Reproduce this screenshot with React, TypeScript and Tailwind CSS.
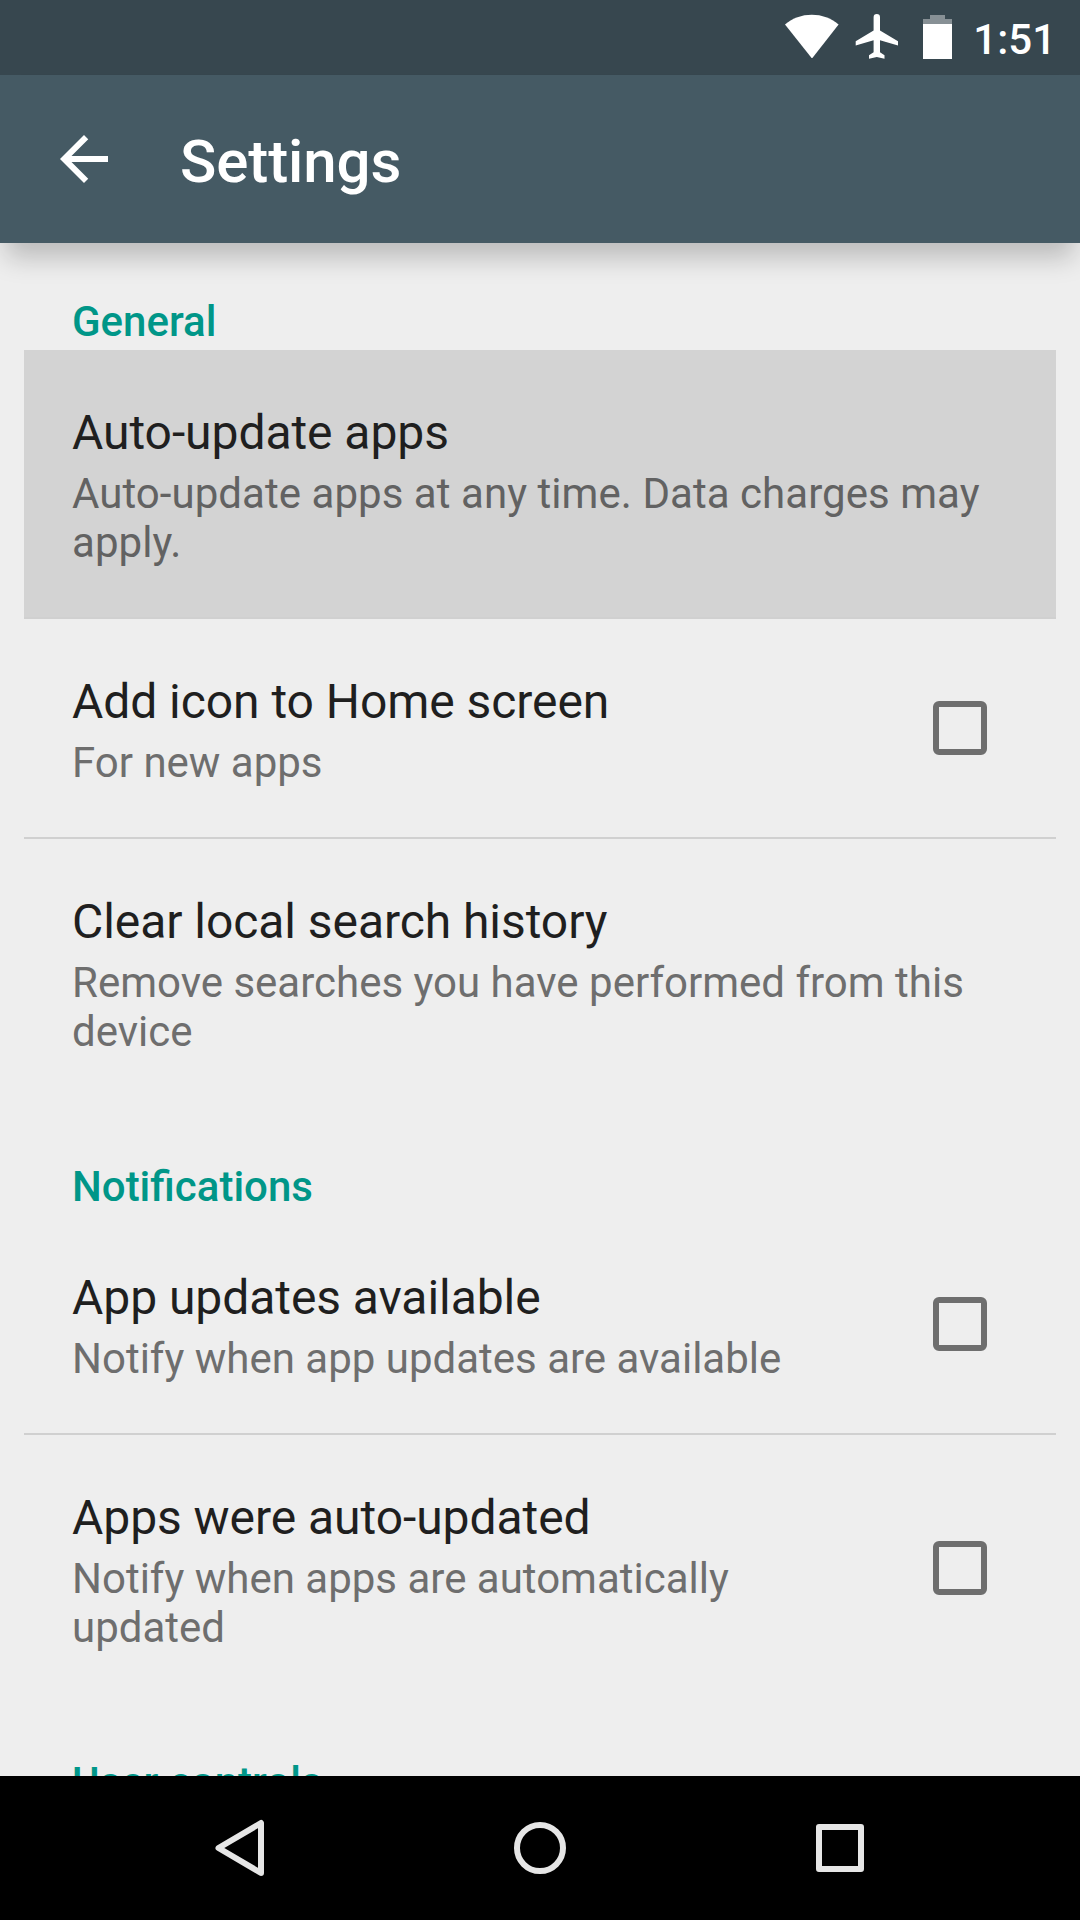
import { clsx } from 'clsx'

type Setting = {
  title: string
  summary: string
  checkbox?: boolean
  pressed?: boolean
}

type Section = {
  heading: string
  items: Setting[]
}

const sections: Section[] = [
  {
    heading: 'General',
    items: [
      {
        title: 'Auto-update apps',
        summary: 'Auto-update apps at any time. Data charges may apply.',
        pressed: true,
      },
      { title: 'Add icon to Home screen', summary: 'For new apps', checkbox: true },
      {
        title: 'Clear local search history',
        summary: 'Remove searches you have performed from this device',
      },
    ],
  },
  {
    heading: 'Notifications',
    items: [
      {
        title: 'App updates available',
        summary: 'Notify when app updates are available',
        checkbox: true,
      },
      {
        title: 'Apps were auto-updated',
        summary: 'Notify when apps are automatically updated',
        checkbox: true,
      },
    ],
  },
  { heading: 'User controls', items: [] },
]

function StatusBar() {
  return (
    <div className="flex h-[75px] shrink-0 items-start justify-end bg-[#37474f] pr-[24px] text-white">
      <svg className="mt-[14px] h-[45px] w-[54px]" viewBox="0 0 54 45" fill="currentColor">
        <path d="M26.6 44 0 10.5C7.600 4 16.800.7 26.800.7S46 4 53.600 10.500L27.400 44Z" />
      </svg>
      <svg className="mt-[14px] ml-[16px] h-[45px] w-[44px]" viewBox="0 0 44 45" fill="currentColor">
        <path d="M43 31.500v-4.200L25 16.400V3.300a3.200 3.200 0 0 0-6.400 0v13.100L.700 27.300v4.200l17.900-5.200v12L14 41.300v3.500l7.800-1.900 7.700 1.900v-3.500L25 38.300v-12Z" />
      </svg>
      <svg className="mt-[15px] ml-[24px] h-[44px] w-[29px]" viewBox="0 0 29 44" fill="currentColor">
        <path d="M7 0h15v4h7v5H0V4h7Z" opacity="0.4" />
        <path d="M0 9h29v35H0Z" />
      </svg>
      <span className="mt-[15px] ml-[21px] text-[42px] leading-[49px] font-medium">1:51</span>
    </div>
  )
}

function AppBar() {
  return (
    <header className="z-10 flex h-[168px] shrink-0 items-center bg-[#455a64] px-12 text-white shadow-[0_20px_25px_-6px_rgba(0,0,0,0.22)]">
      <svg className="size-[72px]" viewBox="0 0 24 24" fill="currentColor">
        <path d="M20 11H7.830l5.590-5.590L12 4l-8 8 8 8 1.410-1.410L7.830 13H20v-2z" />
      </svg>
      <h1 className="mt-[6px] ml-[60px] text-[60px] leading-[70px] font-medium tracking-[-0.1px]">
        Settings
      </h1>
    </header>
  )
}

function SettingRow({ item, last }: { item: Setting; last: boolean }) {
  return (
    <li
      className={clsx(
        'mx-6 flex items-center border-b-2 pt-[54px] pr-[69px] pl-12',
        item.pressed ? 'border-[#d0d0d0] bg-[#d3d3d3] pb-[50px]' : 'pb-[49px]',
        !item.pressed && (last ? 'border-transparent' : 'border-[#d0d0d0]')
      )}
    >
      <div className="flex-1">
        <div className="text-[48px] leading-[57px] tracking-[-0.06px] text-[#1f1f1f]">
          {item.title}
        </div>
        <div
          className={clsx(
            'mt-[8px] min-h-[50px] text-[42px] leading-[49px]',
            item.pressed ? 'tracking-[0.05px] text-[#626262]' : 'text-[#6e6e6e]'
          )}
        >
          {item.summary}
        </div>
      </div>
      {item.checkbox && (
        <span className="mb-[5px] ml-[72px] size-[54px] shrink-0 rounded-[6px] border-6 border-[#6e6e6e]" />
      )}
    </li>
  )
}

function NavBar() {
  return (
    <nav className="z-10 flex h-[144px] shrink-0 items-center justify-center gap-[228px] bg-black text-[#e6e6e6]">
      <svg className="size-[72px]" viewBox="0 0 72 72" fill="none" stroke="currentColor" strokeWidth="6" strokeLinejoin="round">
        <path d="M57 11v50L14.500 36Z" />
      </svg>
      <svg className="size-[72px]" viewBox="0 0 72 72" fill="none" stroke="currentColor" strokeWidth="6">
        <circle cx="36" cy="36" r="23" />
      </svg>
      <svg className="size-[72px]" viewBox="0 0 72 72" fill="none" stroke="currentColor" strokeWidth="6" strokeLinejoin="round">
        <path d="M15 15h42v42H15Z" />
      </svg>
    </nav>
  )
}

export default function App() {
  return (
    <div className="flex h-[1920px] w-[1080px] flex-col overflow-hidden bg-[#eeeeee] font-[Roboto,sans-serif]">
      <StatusBar />
      <AppBar />
      <main className="-mt-px min-h-0 flex-1 overflow-hidden">
        {sections.map((section) => (
          <section key={section.heading}>
            <h2 className="h-[108px] px-[72px] pt-[55px] text-[42px] leading-[49px] font-medium text-[#009688]">
              {section.heading}
            </h2>
            <ul>
              {section.items.map((item, i) => (
                <SettingRow key={item.title} item={item} last={i === section.items.length - 1} />
              ))}
            </ul>
          </section>
        ))}
      </main>
      <NavBar />
    </div>
  )
}
